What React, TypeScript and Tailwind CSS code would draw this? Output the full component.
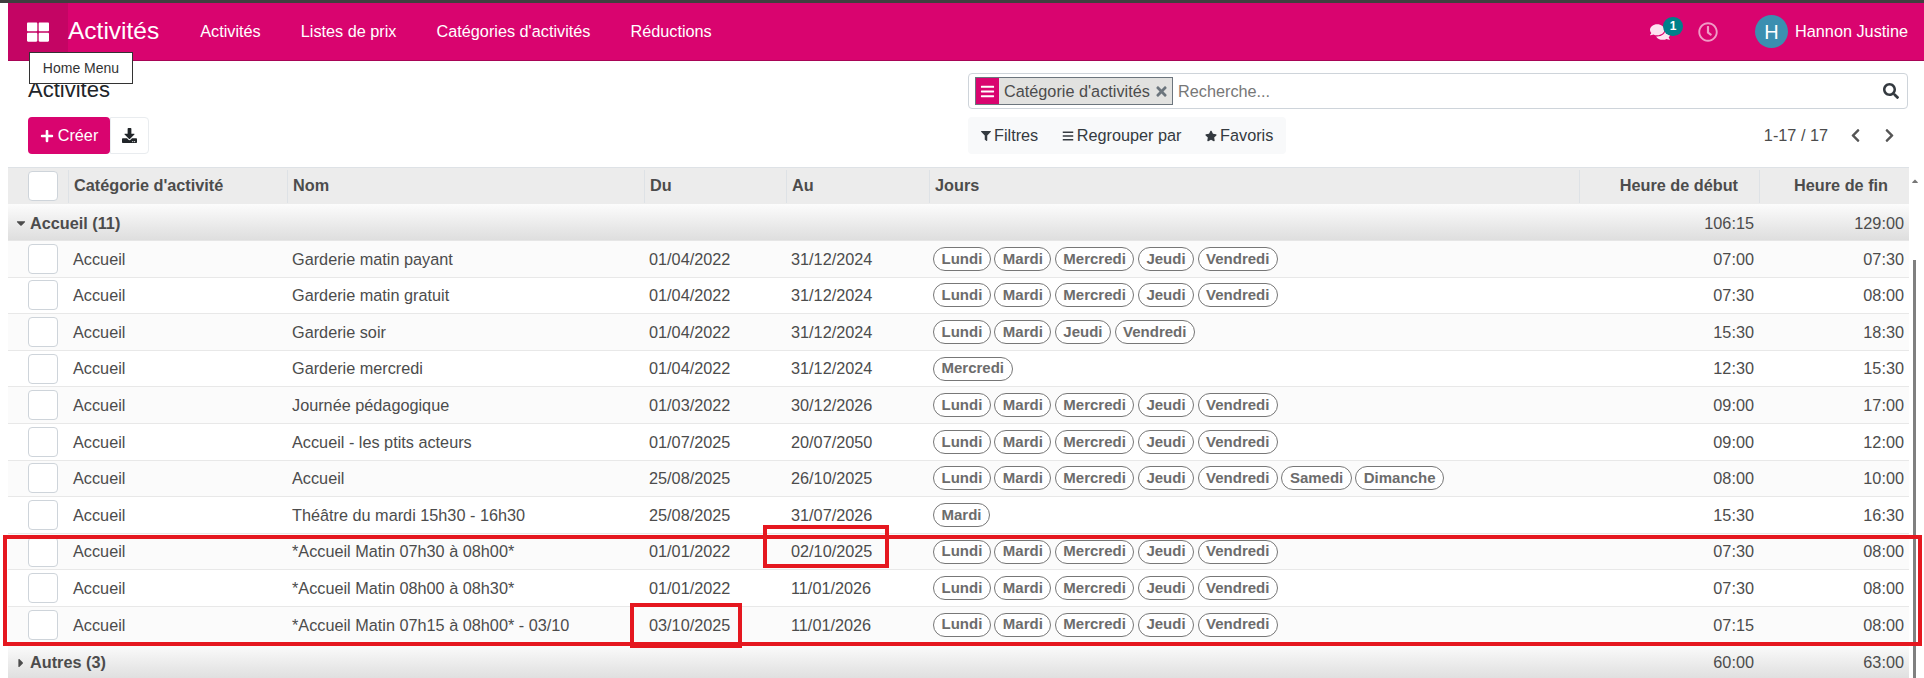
import {
  FaBars,
  FaCaretDown,
  FaCaretRight,
  FaCaretUp,
  FaChevronLeft,
  FaChevronRight,
  FaComments,
  FaDownload,
  FaFilter,
  FaPlus,
  FaRegClock,
  FaSearch,
  FaStar,
  FaThLarge,
  FaTimes,
} from "react-icons/fa";

const WEEK = ["Lundi", "Mardi", "Mercredi", "Jeudi", "Vendredi"];

const rows = [
  { name: "Garderie matin payant", from: "01/04/2022", to: "31/12/2024", days: WEEK, start: "07:00", end: "07:30" },
  { name: "Garderie matin gratuit", from: "01/04/2022", to: "31/12/2024", days: WEEK, start: "07:30", end: "08:00" },
  { name: "Garderie soir", from: "01/04/2022", to: "31/12/2024", days: ["Lundi", "Mardi", "Jeudi", "Vendredi"], start: "15:30", end: "18:30" },
  { name: "Garderie mercredi", from: "01/04/2022", to: "31/12/2024", days: ["Mercredi"], start: "12:30", end: "15:30" },
  { name: "Journée pédagogique", from: "01/03/2022", to: "30/12/2026", days: WEEK, start: "09:00", end: "17:00" },
  { name: "Accueil - les ptits acteurs", from: "01/07/2025", to: "20/07/2050", days: WEEK, start: "09:00", end: "12:00" },
  { name: "Accueil", from: "25/08/2025", to: "26/10/2025", days: [...WEEK, "Samedi", "Dimanche"], start: "08:00", end: "10:00" },
  { name: "Théâtre du mardi 15h30 - 16h30", from: "25/08/2025", to: "31/07/2026", days: ["Mardi"], start: "15:30", end: "16:30" },
  { name: "*Accueil Matin 07h30 à 08h00*", from: "01/01/2022", to: "02/10/2025", days: WEEK, start: "07:30", end: "08:00" },
  { name: "*Accueil Matin 08h00 à 08h30*", from: "01/01/2022", to: "11/01/2026", days: WEEK, start: "07:30", end: "08:00" },
  { name: "*Accueil Matin 07h15 à 08h00* - 03/10", from: "03/10/2025", to: "11/01/2026", days: WEEK, start: "07:15", end: "08:00" },
];

const COLS = "grid grid-cols-[60px_219px_357px_142px_143px_650px_180px_150px] items-center";

function Checkbox() {
  return <div className="ml-[20px] h-[30px] w-[30px] rounded-[4px] border border-[#ced4da] bg-white" />;
}

function GroupRow({ label, start, end, open }: { label: string; start: string; end: string; open?: boolean }) {
  return (
    <div className="flex h-[37px] shrink-0 items-center border-b border-[#e6e6e6] bg-gradient-to-b from-[#fcfcfc] to-[#dedede] pl-[6px] pt-[2px] text-[#4c4c4c]">
      {open ? <FaCaretDown className="text-[14px]" /> : <FaCaretRight className="text-[14px]" />}
      <span className="ml-[2px] flex-1 font-bold">{label}</span>
      <span className="w-[100px] pr-[5px] text-right">{start}</span>
      <span className="w-[150px] pr-[5px] text-right">{end}</span>
    </div>
  );
}

function HeadCell({ children, right }: { children: string; right?: boolean }) {
  return (
    <div className={`flex h-[33px] items-center border-l border-[#dee2e6] pb-[2px] font-bold ${right ? "justify-end pr-[21px]" : "pl-[5px]"}`}>
      {children}
    </div>
  );
}

export default function App() {
  return (
    <div className="relative flex h-[678px] flex-col overflow-hidden bg-white font-['Liberation_Sans',Arial,sans-serif] text-[16.25px] text-[#4c4c4c]">
      <div className="h-[3px] shrink-0 bg-[#3f3f3f]" />

      <header className="ml-2 flex h-[58px] shrink-0 items-center border-b border-[#a80456] bg-[#d9046f] text-white">
        <div className="flex h-full w-[60px] items-center justify-center bg-[#c40564] text-[22px]">
          <FaThLarge />
        </div>
        <span className="text-[24.5px]">Activités</span>
        <nav className="ml-[41px] flex gap-[40px] text-[16.25px]">
          <span>Activités</span>
          <span>Listes de prix</span>
          <span>Catégories d'activités</span>
          <span>Réductions</span>
        </nav>
        <div className="ml-auto flex items-center pr-[16px]">
          <div className="relative mr-[28px] text-[20px] text-[#fde3f0]">
            <FaComments />
            <span className="absolute -top-[5px] left-[13px] flex h-[19px] w-[20px] items-center justify-center rounded-full bg-[#00808a] text-[12px] font-bold text-white">
              1
            </span>
          </div>
          <FaRegClock className="mr-[37px] text-[20px] text-[#f09cc6]" />
          <div className="mr-[7px] flex h-[33px] w-[33px] items-center justify-center rounded-full bg-[#3b8fb0] text-[20px]">H</div>
          <span>Hannon Justine</span>
        </div>
      </header>

      <section className="flex h-[106px] shrink-0 justify-between pl-[28px] pr-[16px]">
        <div className="flex flex-col">
          <h1 className="mt-[16px] h-[26px] text-[22px] leading-[26px] text-[#212529]">Activités</h1>
          <div className="mt-[14px] flex">
            <button className="flex h-[37px] w-[82px] items-center justify-center gap-[4px] rounded-[4px] bg-[#d9046f] text-white">
              <FaPlus className="text-[14px]" /> Créer
            </button>
            <button className="flex h-[37px] w-[39px] items-center justify-center rounded-r-[4px] border border-[#e9ecef] text-[15px] text-[#212529]">
              <FaDownload />
            </button>
          </div>
        </div>

        <div className="flex w-[940px] flex-col">
          <div className="mt-[12px] flex h-[36px] items-center rounded-[4px] border border-[#ced4da] pl-[6px] pr-[8px]">
            <div className="flex h-[28px] w-[198px] items-center border border-[#6c757d] bg-[#e2e2e0]">
              <span className="flex h-full w-[23px] items-center justify-center bg-[#d9046f] text-[15px] text-white">
                <FaBars />
              </span>
              <span className="ml-[5px] whitespace-nowrap text-[#4c4c4c]">Catégorie d'activités</span>
              <FaTimes className="ml-auto mr-[3px] text-[15px] text-[#6c757d]" />
            </div>
            <span className="ml-[5px] text-[#777]">Recherche...</span>
            <FaSearch className="ml-auto text-[16px] text-[#343a40]" />
          </div>
          <div className="mt-[8px] flex items-center justify-between">
            <div className="flex h-[37px] w-[318px] items-center gap-[23.5px] rounded-[4px] bg-[#f8f9fa] pl-[13px] text-[#343a40]">
              <span className="flex items-center gap-[3px]"><FaFilter className="text-[10px]" />Filtres</span>
              <span className="flex items-center gap-[3px]"><FaBars className="text-[12px]" />Regrouper par</span>
              <span className="flex items-center gap-[3px]"><FaStar className="text-[12px]" />Favoris</span>
            </div>
            <div className="flex items-center pr-[11px] text-[#4c4c4c]">
              <span>1-17 / 17</span>
              <FaChevronLeft className="ml-[20px] text-[15px] text-[#555]" />
              <FaChevronRight className="ml-[19px] text-[15px] text-[#555]" />
            </div>
          </div>
        </div>
      </section>

      <div className="ml-2 flex w-[1901px] flex-col">
        <div className={`${COLS} h-[37px] shrink-0 border-t border-[#dee2e6] bg-[#ececec] text-[#4c4c4c]`}>
          <Checkbox />
          <HeadCell>Catégorie d'activité</HeadCell>
          <HeadCell>Nom</HeadCell>
          <HeadCell>Du</HeadCell>
          <HeadCell>Au</HeadCell>
          <HeadCell>Jours</HeadCell>
          <HeadCell right>Heure de début</HeadCell>
          <HeadCell right>Heure de fin</HeadCell>
        </div>

        <GroupRow label="Accueil (11)" start="106:15" end="129:00" open />

        {rows.map((row, idx) => (
          <div
            key={`${idx}.${row.name}`}
            className={`${COLS} h-[36.6px] shrink-0 border-b border-[#e8e8e8] ${idx % 2 === 0 ? "bg-[#fbfbfb]" : "bg-white"}`}
          >
            <Checkbox />
            <div className="pl-[5px]">Accueil</div>
            <div className="pl-[5px]">{row.name}</div>
            <div className="pl-[5px]">{row.from}</div>
            <div className="pl-[5px]">{row.to}</div>
            <div className="flex gap-[3.5px] pl-[4px]">
              {row.days.map((day) => (
                <span
                  key={day}
                  className="flex h-[24px] items-center rounded-full border border-[#777] bg-white px-[7.5px] text-[15px] font-bold text-[#6c6c6c]"
                >
                  {day}
                </span>
              ))}
            </div>
            <div className="pr-[5px] text-right">{row.start}</div>
            <div className="pr-[5px] text-right">{row.end}</div>
          </div>
        ))}

        <GroupRow label="Autres (3)" start="60:00" end="63:00" />
      </div>

      {/* scrollbar */}
      <FaCaretUp className="absolute left-[1910px] top-[176px] text-[10px] text-[#777]" />
      <div className="absolute left-[1913px] top-[260px] h-[418px] w-[3px] bg-[#808080]" />

      {/* tooltip */}
      <div className="absolute left-[29px] top-[52px] flex h-[32px] w-[104px] items-center justify-center border-[1.5px] border-[#333] bg-white text-[14px] text-[#333]">
        Home Menu
      </div>

      {/* red annotations */}
      <div className="absolute left-[3px] top-[535px] h-[111px] w-[1919px] border-4 border-[#e5171f]" />
      <div className="absolute left-[763px] top-[525px] h-[43px] w-[126px] border-4 border-[#e5171f]" />
      <div className="absolute left-[630px] top-[603px] h-[45px] w-[112px] border-4 border-[#e5171f]" />
    </div>
  );
}
